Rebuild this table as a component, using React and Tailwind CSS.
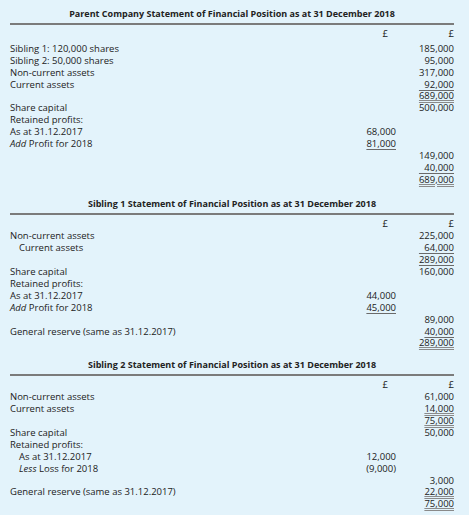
const sections = [
  {
    title: "Parent Company Statement of Financial Position as at 31 December 2018",
    titleGap: "mt-[8px]",
    firstGap: "mt-[3px]",
    rows: [
      { label: "Sibling 1: 120,000 shares", right: "185,000" },
      { label: "Sibling 2: 50,000 shares", right: "95,000" },
      { label: "Non-current assets", right: "317,000" },
      { label: "Current assets", right: "\u200792,000", rightU: "single" },
      { right: "689,000", rightU: "double" },
      { label: "Share capital", right: "500,000" },
      { label: "Retained profits:" },
      { label: "As at 31.12.2017", mid: "68,000" },
      { em: "Add", label: " Profit for 2018", mid: "81,000", midU: "single" },
      { right: "149,000" },
      { right: "\u200740,000", rightU: "single" },
      { right: "689,000", rightU: "double" },
    ],
  },
  {
    title: "Sibling 1 Statement of Financial Position as at 31 December 2018",
    titleGap: "mt-[12px]",
    firstGap: "mt-[1px]",
    rows: [
      { label: "Non-current assets", right: "225,000" },
      { label: "Current assets", indent: true, right: "\u200764,000", rightU: "single" },
      { right: "289,000", rightU: "single" },
      { label: "Share capital", right: "160,000" },
      { label: "Retained profits:" },
      { label: "As at 31.12.2017", mid: "44,000" },
      { em: "Add", label: " Profit for 2018", mid: "45,000", midU: "single" },
      { right: "89,000" },
      { label: "General reserve (same as 31.12.2017)", right: "40,000", rightU: "single" },
      { right: "289,000", rightU: "double" },
    ],
  },
  {
    title: "Sibling 2 Statement of Financial Position as at 31 December 2018",
    titleGap: "mt-[10px]",
    firstGap: "mt-0",
    rows: [
      { label: "Non-current assets", right: "61,000" },
      { label: "Current assets", right: "14,000", rightU: "double" },
      { right: "75,000", rightU: "double" },
      { label: "Share capital", right: "50,000" },
      { label: "Retained profits:" },
      { label: "As at 31.12.2017", indent: true, mid: "12,000" },
      { em: "Less", label: " Loss for 2018", indent: true, mid: "(9,000)" },
      { right: "3,000" },
      { label: "General reserve (same as 31.12.2017)", right: "22,000", rightU: "double" },
      { right: "75,000", rightU: "double" },
    ],
  },
];

function Amount({ value, rule }) {
  if (!value) return null;
  const line =
    rule === "double"
      ? "underline decoration-double decoration-[#8a8a8a] decoration-1 underline-offset-[1px]"
      : rule === "single"
      ? "underline decoration-[#6a6a6a] decoration-1 underline-offset-[2px]"
      : "";
  return <span className={`whitespace-pre ${line}`}>{value}</span>;
}

function Row({ row }) {
  return (
    <div className="flex h-[11.9px] items-center whitespace-nowrap leading-[11.9px]">
      <div className={`flex-1 ${row.indent ? "pl-[9px]" : ""}`}>
        {row.em && <i>{row.em}</i>}
        {row.label}
      </div>
      <div className="w-[60px] text-right">
        <Amount value={row.mid} rule={row.midU} />
      </div>
      <div className="w-[58px] text-right">
        <Amount value={row.right} rule={row.rightU} />
      </div>
    </div>
  );
}

export default function App() {
  return (
    <div
      className="w-[469px] h-[515px] overflow-hidden bg-[#e3f3fb] pl-[10px] pr-[15px] text-[9.5px] text-[#222]"
      style={{ fontFamily: '"Open Sans", Arial, sans-serif' }}
    >
      {sections.map((s) => (
        <div key={s.title}>
          <div className={`${s.titleGap} text-center text-[9px] font-bold leading-[12px]`}>{s.title}</div>
          <div className="mt-[3px] h-[2px] bg-[#7b7b7b]" />
          <div className="mt-[3px] flex h-[11.9px] items-center leading-[11.9px]">
            <div className="flex-1" />
            <div className="w-[60px] text-right pr-[8px]">£</div>
            <div className="w-[58px] text-right">£</div>
          </div>
          <div className={s.firstGap}>
            {s.rows.map((r, i) => (
              <Row key={i} row={r} />
            ))}
          </div>
        </div>
      ))}
    </div>
  );
}
